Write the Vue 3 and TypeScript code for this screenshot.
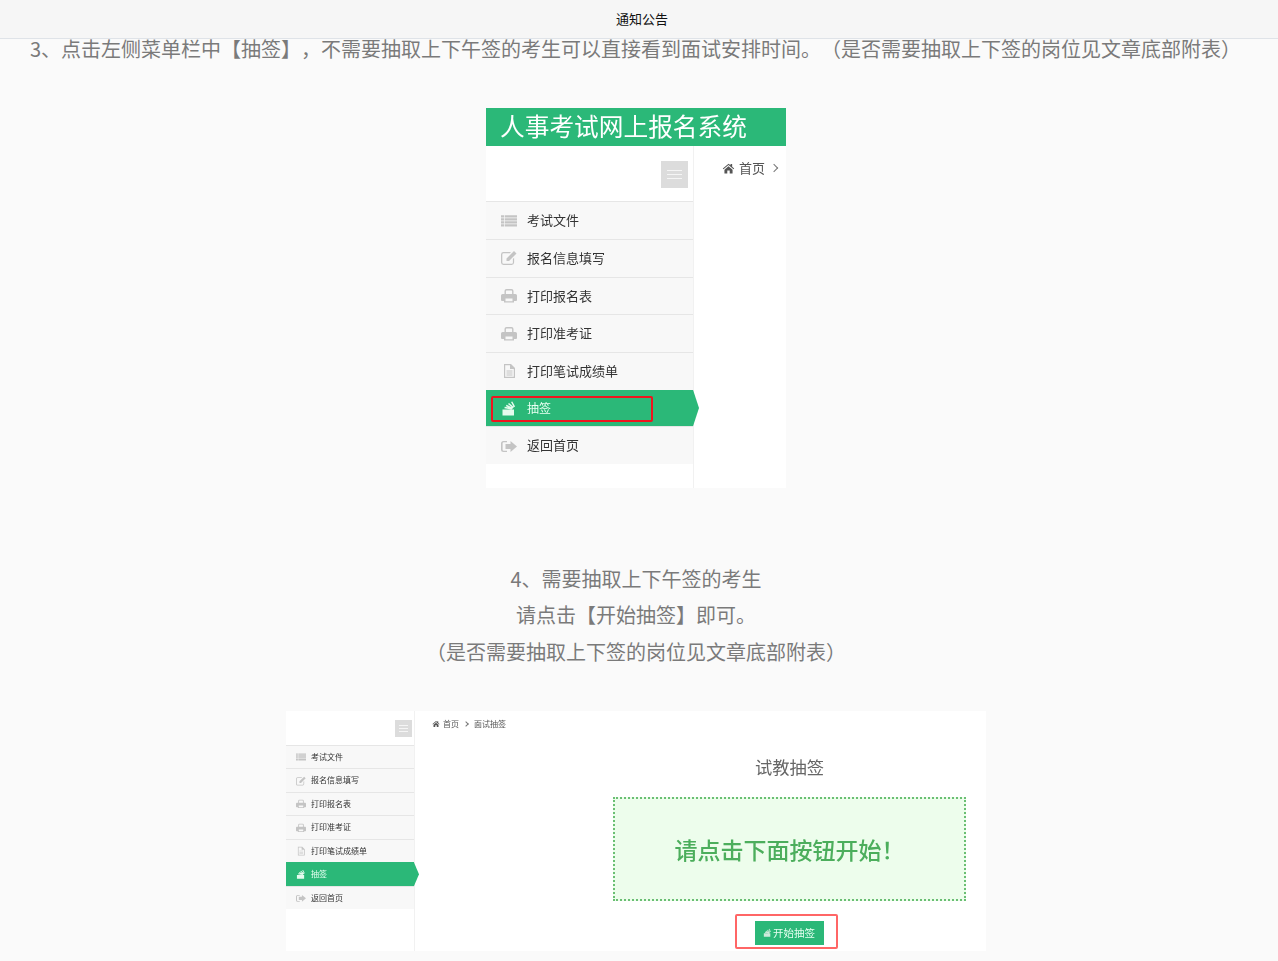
<script setup lang="ts">
interface Item { label: string; icon: string; active?: boolean }
const items: Item[] = [
  { label: '考试文件', icon: 'list' },
  { label: '报名信息填写', icon: 'edit' },
  { label: '打印报名表', icon: 'print' },
  { label: '打印准考证', icon: 'print' },
  { label: '打印笔试成绩单', icon: 'file' },
  { label: '抽签', icon: 'stack', active: true },
  { label: '返回首页', icon: 'share' },
]
const icons: Record<string, string> = {
  list: 'M0 2.200h3v2.200H0zM3.700 2.200H16v2.200H3.700zM0 5.200h3v2.200H0zM3.700 5.200H16v2.200H3.700zM0 8.200h3v2.200H0zM3.700 8.200H16v2.200H3.700zM0 11.200h3v2.200H0zM3.700 11.200H16v2.200H3.700z',
  edit: 'M2.500 2H10L8.800 3.200H2.500A1.200 1.200 0 0 0 1.300 4.400v8.200a1.200 1.200 0 0 0 1.200 1.200h8.200a1.200 1.200 0 0 0 1.200-1.200V9l1.200-1.200v4.800a2.500 2.500 0 0 1-2.400 2.400H2.500A2.500 2.500 0 0 1 0 12.600V4.400A2.500 2.500 0 0 1 2.500 2zM13 1l2.500 2.500L8 11H5.500V8.500z',
  print: 'M5.500 1h5A2 2 0 0 1 12.500 3v3h2A1.500 1.500 0 0 1 16 7.500V12a1 1 0 0 1-1 1h-2v1.500H3V13H1a1 1 0 0 1-1-1V7.500A1.500 1.500 0 0 1 1.500 6h2V3A2 2 0 0 1 5.500 1zM5.500 2.500a.6.6 0 0 0-.6.6V6h6.200V3.100a.6.6 0 0 0-.6-.6zM4.500 10.500v2.700h7v-2.700z',
  file: 'M3 1h7l4 4v10H3zM4.200 2.200v11.600h8.600V6H9V2.200zM5.500 7.500h6v1h-6zM5.500 9.500h6v1h-6zM5.500 11.500h6v1h-6z',
  stack: 'M1.500 9.500H13V15.500H1.500zM3.400 8.300l.3-1.500 7.300 1.200-.3 1.500zM4.900 6.200l.6-1.400 6.400 2.900-.6 1.400zM7 4l1-1.100 4.900 4.200-1 1.100zM10 2.100l1.300-.7 2.800 5.200-1.300.7z',
  share: 'M2.500 3H6v1.300H2.800A1.200 1.200 0 0 0 1.600 5.500v6a1.200 1.200 0 0 0 1.200 1.200H6V14H2.500A2.500 2.500 0 0 1 0 11.500v-6A2.500 2.500 0 0 1 2.500 3zM9.500 3 16 8.500 9.500 14v-3H4.500V6h5z',
}
const home = 'M8 2 1 8l.8 1L8 3.800 14.200 9l.8-1-2.500-2.200V2.500h-2v1.600zM3 9.500 8 5.300l5 4.200V14H9.500v-3.500h-3V14H3z'
</script>

<template>
  <div class="page">
    <header class="topbar">通知公告</header>
    <article class="article">
      <p class="lead">3、点击左侧菜单栏中【抽签】，不需要抽取上下午签的考生可以直接看到面试安排时间。（是否需要抽取上下签的岗位见文章底部附表）</p>

      <section class="shot large">
        <div class="brand">人事考试网上报名系统</div>
        <div class="shot-body">
          <aside class="side">
            <div class="side-top"><span class="toggle"><i></i><i></i><i></i></span></div>
            <ul class="menu">
              <li v-for="item in items" :key="item.label" :class="{ active: item.active }">
                <svg class="icon" viewBox="0 0 16 16"><path :d="icons[item.icon]" /></svg>
                <span>{{ item.label }}</span>
                <b v-if="item.active" class="marker"></b>
              </li>
            </ul>
          </aside>
          <main class="content">
            <nav class="crumb">
              <svg class="home" viewBox="0 0 16 16"><path :d="home" /></svg>
              <span>首页</span><em class="chev"></em>
            </nav>
          </main>
        </div>
      </section>

      <div class="steps">
        <p>4、需要抽取上下午签的考生</p>
        <p>请点击【开始抽签】即可。</p>
        <p>（是否需要抽取上下签的岗位见文章底部附表）</p>
      </div>

      <section class="shot small">
        <div class="shot-body">
          <aside class="side">
            <div class="side-top"><span class="toggle"><i></i><i></i><i></i></span></div>
            <ul class="menu">
              <li v-for="item in items" :key="item.label" :class="{ active: item.active }">
                <svg class="icon" viewBox="0 0 16 16"><path :d="icons[item.icon]" /></svg>
                <span>{{ item.label }}</span>
                <b v-if="item.active" class="marker"></b>
              </li>
            </ul>
          </aside>
          <main class="content">
            <nav class="crumb">
              <svg class="home" viewBox="0 0 16 16"><path :d="home" /></svg>
              <span>首页</span><em class="chev"></em><span>面试抽签</span>
            </nav>
            <div class="draw">
              <h3>试教抽签</h3>
              <div class="notice">请点击下面按钮开始！</div>
              <div class="start-wrap">
                <button class="start" type="button">
                  <svg viewBox="0 0 16 16"><path :d="icons.stack" /></svg>开始抽签
                </button>
              </div>
            </div>
          </main>
        </div>
      </section>
    </article>
  </div>
</template>

<style>
html, body { margin: 0; background: #fafafa; }
</style>

<style scoped>
.page {
  position: relative;
  height: 961px;
  overflow: hidden;
  background: #fafafa;
  font-family: "Noto Sans CJK SC", "Liberation Sans", sans-serif;
  text-spacing-trim: space-all;
  font-feature-settings: "palt" 0, "chws" 0;
}
.topbar {
  position: absolute;
  top: 0; left: 0; right: 0;
  height: 38px;
  line-height: 38px;
  text-align: center;
  font-size: 13px;
  color: #111;
  background: #f6f6f6;
  border-bottom: 1px solid #dfe3e8;
  padding-left: 6px;
  z-index: 2;
}
.article {
  padding: 31px 36px 0 30px;
  color: #7a7a7a;
  font-size: 20px;
  line-height: 36.500px;
}
.article p { margin: 0; }
.lead { white-space: nowrap; }
.steps { margin-top: 72.800px; text-align: center; }
.shot { margin: 0 auto; background: #fff; display: flex; flex-direction: column; }
.large { width: 300px; height: 380px; margin-top: 40.500px; filter: blur(0.2px); }
.small { width: 700px; height: 240px; margin-top: 40.700px; filter: blur(0.4px); }
.brand {
  height: 38px;
  line-height: 35px;
  padding-left: 14px;
  font-size: 24.700px;
  color: #fff;
  background: #2bb878;
  white-space: nowrap;
}
.shot-body { flex: 1; display: flex; min-height: 0; }
.side { flex: none; display: flex; flex-direction: column; border-right: 1px solid #f1f1f1; }
.large .side { width: 207px; }
.small .side { width: 128px; }
.side-top { display: flex; justify-content: flex-end; }
.large .side-top { height: 55.300px; padding: 15px 5px 0 0; box-sizing: border-box; }
.small .side-top { height: 34px; padding: 9px 2px 0 0; box-sizing: border-box; }
.toggle {
  display: flex;
  flex-direction: column;
  justify-content: center;
  align-items: center;
  background: #dcdcdc;
}
.large .toggle { width: 27px; height: 27px; gap: 3px; }
.small .toggle { width: 17px; height: 17px; gap: 2px; }
.toggle i { display: block; height: 1px; background: #f5f5f5; }
.large .toggle i { width: 15px; }
.small .toggle i { width: 9px; }
.menu { list-style: none; margin: 0; padding: 0; }
.menu li {
  position: relative;
  display: flex;
  align-items: center;
  box-sizing: border-box;
  background: #f8f8f8;
  border-top: 1px solid #e6e6e6;
  color: #333;
  white-space: nowrap;
}
.large .menu li { height: 37.700px; padding-left: 15px; font-size: 13px; }
.small .menu li { height: 23.500px; padding-left: 10px; font-size: 8px; }
.icon { flex: none; fill: #c4c4c4; }
.large .icon { width: 16px; height: 16px; margin-right: 10px; }
.small .icon { width: 10px; height: 10px; margin-right: 5px; }
.menu li.active { background: #2bb878; color: #e8fff2; border-top: 0; }
.menu li.active .icon { fill: #e6fbee; }
.large .menu li.active { height: 36.500px; padding-top: 1px; font-size: 12px; }
.large .menu li.active::after {
  content: "";
  position: absolute;
  left: 5px; top: 6px;
  width: 158px; height: 22px;
  border: 2px solid #f0141e;
  border-radius: 2px;
}
.marker {
  position: absolute;
  top: 0; bottom: 0;
  left: 100%;
  background: #2bb878;
  clip-path: polygon(0 0, 100% 50%, 0 100%);
}
.large .marker { width: 6px; }
.small .marker { width: 5px; }
.content { flex: 1; min-width: 0; }
.crumb { display: flex; align-items: center; color: #555; white-space: nowrap; }
.large .crumb { padding: 13px 0 0 28px; font-size: 13px; line-height: 18px; }
.small .crumb { padding: 6px 0 0 17px; font-size: 8px; line-height: 14px; }
.home { flex: none; fill: #555; }
.large .home { width: 13px; height: 13px; margin-right: 4px; }
.small .home { width: 8px; height: 8px; margin-right: 3px; }
.chev {
  display: block;
  border-top: 1px solid #777;
  border-right: 1px solid #777;
  transform: rotate(45deg);
}
.large .chev { width: 5px; height: 5px; margin-left: 6px; }
.small .chev { width: 3px; height: 3px; margin: 0 6px 0 5px; }
.draw { width: 353px; margin: 25px 0 0 198px; display: flex; flex-direction: column; align-items: center; }
.draw h3 {
  margin: 0;
  font-size: 17.300px;
  font-weight: 400;
  line-height: 22px;
  color: #666;
}
.notice {
  box-sizing: border-box;
  width: 353px;
  height: 104px;
  margin-top: 19px;
  display: flex;
  align-items: center;
  justify-content: center;
  border: 2px dotted #6abf73;
  background: #edfdec;
  color: #4cae5c;
  font-size: 23px;
  font-weight: 500;
}
.start-wrap {
  box-sizing: border-box;
  width: 103px;
  height: 35px;
  margin: 13px 0 0 -6px;
  display: flex;
  align-items: center;
  justify-content: center;
  border: 2px solid #f66;
  border-radius: 2px;
  padding: 3px 0 0 5px;
}
.start {
  display: flex;
  align-items: center;
  justify-content: center;
  gap: 1px;
  width: 69px;
  height: 24px;
  padding: 0;
  border: 0;
  background: #2bb878;
  color: #e8fff2;
  font: 10.500px/24px "Noto Sans CJK SC", "Liberation Sans", sans-serif;
}
.start svg { width: 9px; height: 9px; fill: #cfeadb; }
</style>
